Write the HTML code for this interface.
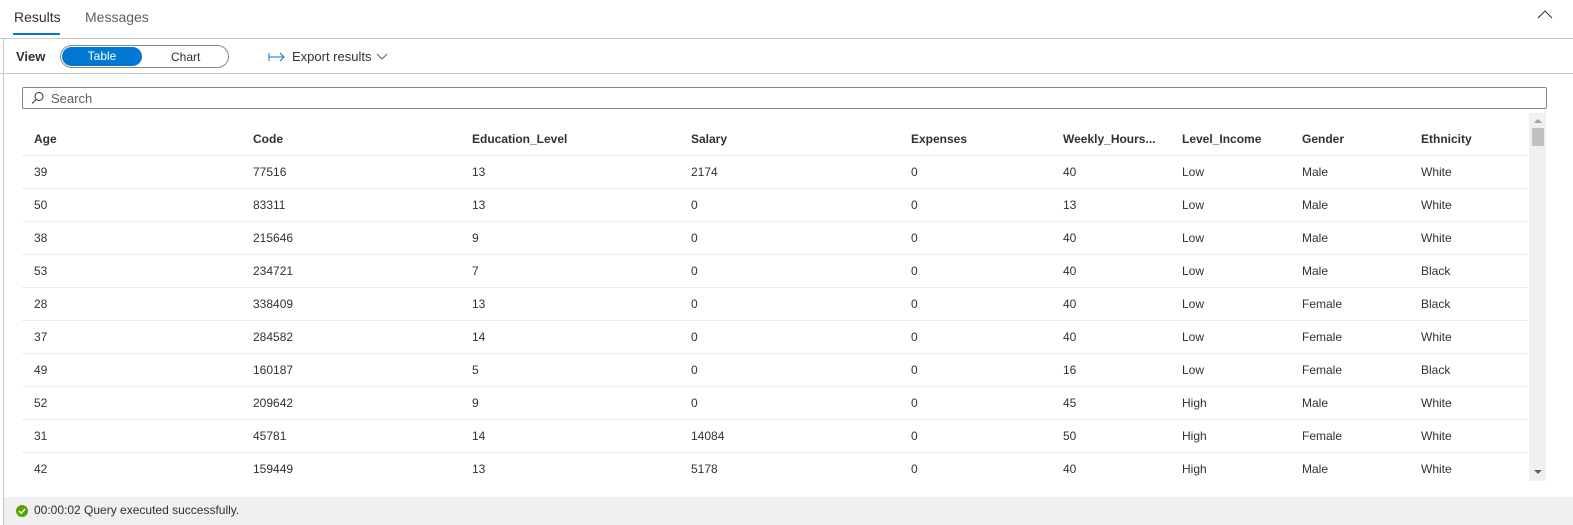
<!DOCTYPE html>
<html><head><style>
body{margin:0;width:1573px;height:525px;position:relative;overflow:hidden;background:#fff;font-family:"Segoe UI","Liberation Sans",sans-serif;font-size:12px;color:#323130}
.a{position:absolute}
.r{position:absolute;left:22px;width:1506px;height:33px;border-bottom:1px solid #edebe9}
.r span{position:absolute;top:10px}
.h span{font-weight:bold;color:#323130}
</style></head><body>
<div class="a" style="left:3px;top:38px;width:1px;height:487px;background:#c8c6c4"></div>
<div class="a" style="left:0;top:38px;width:1573px;height:1px;background:#c8c6c4"></div>
<div class="a" style="left:0;top:73px;width:1573px;height:1px;background:#c8c6c4"></div>
<div class="a" style="left:14px;top:9px;font-size:14px;color:#323130">Results</div>
<div class="a" style="left:13px;top:33px;width:47px;height:2px;background:#0078d4"></div>
<div class="a" style="left:85px;top:9px;font-size:14px;color:#605e5c">Messages</div>
<svg class="a" style="left:1537px;top:10px" width="16" height="10"><path d="M1 8 L8 1 L15 8" fill="none" stroke="#323130" stroke-width="1"/></svg>
<div class="a" style="left:16px;top:49px;font-size:13px;font-weight:600">View</div>
<div class="a" style="left:60px;top:45px;width:167px;height:21px;border:1px solid #8a8886;border-radius:12px"></div>
<div class="a" style="left:62px;top:47px;width:80px;height:19px;background:#0078d4;border-radius:10px;color:#fff;text-align:center;line-height:19px">Table</div>
<div class="a" style="left:171px;top:50px">Chart</div>
<svg class="a" style="left:268px;top:52px" width="18" height="10"><path d="M1 1V9M1 5H16M12 1L16 5L12 9" fill="none" stroke="#0078d4" stroke-width="1"/></svg>
<div class="a" style="left:292px;top:49px;font-size:13px">Export results</div>
<svg class="a" style="left:376px;top:53px" width="12" height="8"><path d="M1 1L6 6L11 1" fill="none" stroke="#605e5c"/></svg>
<div class="a" style="left:22px;top:87px;width:1523px;height:20px;border:1px solid #8a8886;border-radius:2px"></div>
<svg class="a" style="left:31px;top:91px" width="14" height="14"><circle cx="8" cy="5.5" r="4" fill="none" stroke="#323130"/><path d="M5 8.5L1 12.5" stroke="#323130"/></svg>
<div class="a" style="left:51px;top:91px;font-size:13px;color:#605e5c">Search</div>
<div class="a" style="left:1529px;top:113px;width:17px;height:368px;background:#f0f0f0"></div>
<div class="a" style="left:1532px;top:128px;width:12px;height:18px;background:#c1c1c1"></div>
<svg class="a" style="left:1533px;top:118px" width="10" height="6"><path d="M1 5L5 1L9 5Z" fill="#a0a0a0"/></svg>
<svg class="a" style="left:1533px;top:469px" width="10" height="6"><path d="M1 1L5 5L9 1Z" fill="#606060"/></svg>
<div id="t"></div>
<div class="a" style="left:4px;top:497px;width:1569px;height:28px;background:#f0f0f0"></div>
<svg class="a" style="left:16px;top:505px" width="12" height="12"><circle cx="6" cy="6" r="6" fill="#57a300"/><path d="M3 6L5.2 8.2L9 4" fill="none" stroke="#fff" stroke-width="1.5"/></svg>
<div class="a" style="left:34px;top:503px">00:00:02 Query executed successfully.</div>
<script>
var xs=[12,231,450,669,889,1041,1160,1280,1399];
var rows=[["Age","Code","Education_Level","Salary","Expenses","Weekly_Hours...","Level_Income","Gender","Ethnicity"],
["39","77516","13","2174","0","40","Low","Male","White"],
["50","83311","13","0","0","13","Low","Male","White"],
["38","215646","9","0","0","40","Low","Male","White"],
["53","234721","7","0","0","40","Low","Male","Black"],
["28","338409","13","0","0","40","Low","Female","Black"],
["37","284582","14","0","0","40","Low","Female","White"],
["49","160187","5","0","0","16","Low","Female","Black"],
["52","209642","9","0","0","45","High","Male","White"],
["31","45781","14","14084","0","50","High","Female","White"],
["42","159449","13","5178","0","40","High","Male","White"]];
var h="";rows.forEach(function(r,i){h+='<div class="r'+(i==0?' h':'')+'" style="top:'+(122+33*i)+'px;'+(i==10?'border:none':'')+'">';r.forEach(function(c,j){h+='<span style="left:'+xs[j]+'px">'+c+'</span>'});h+='</div>'});
document.getElementById('t').innerHTML=h;
</script>
</body></html>
